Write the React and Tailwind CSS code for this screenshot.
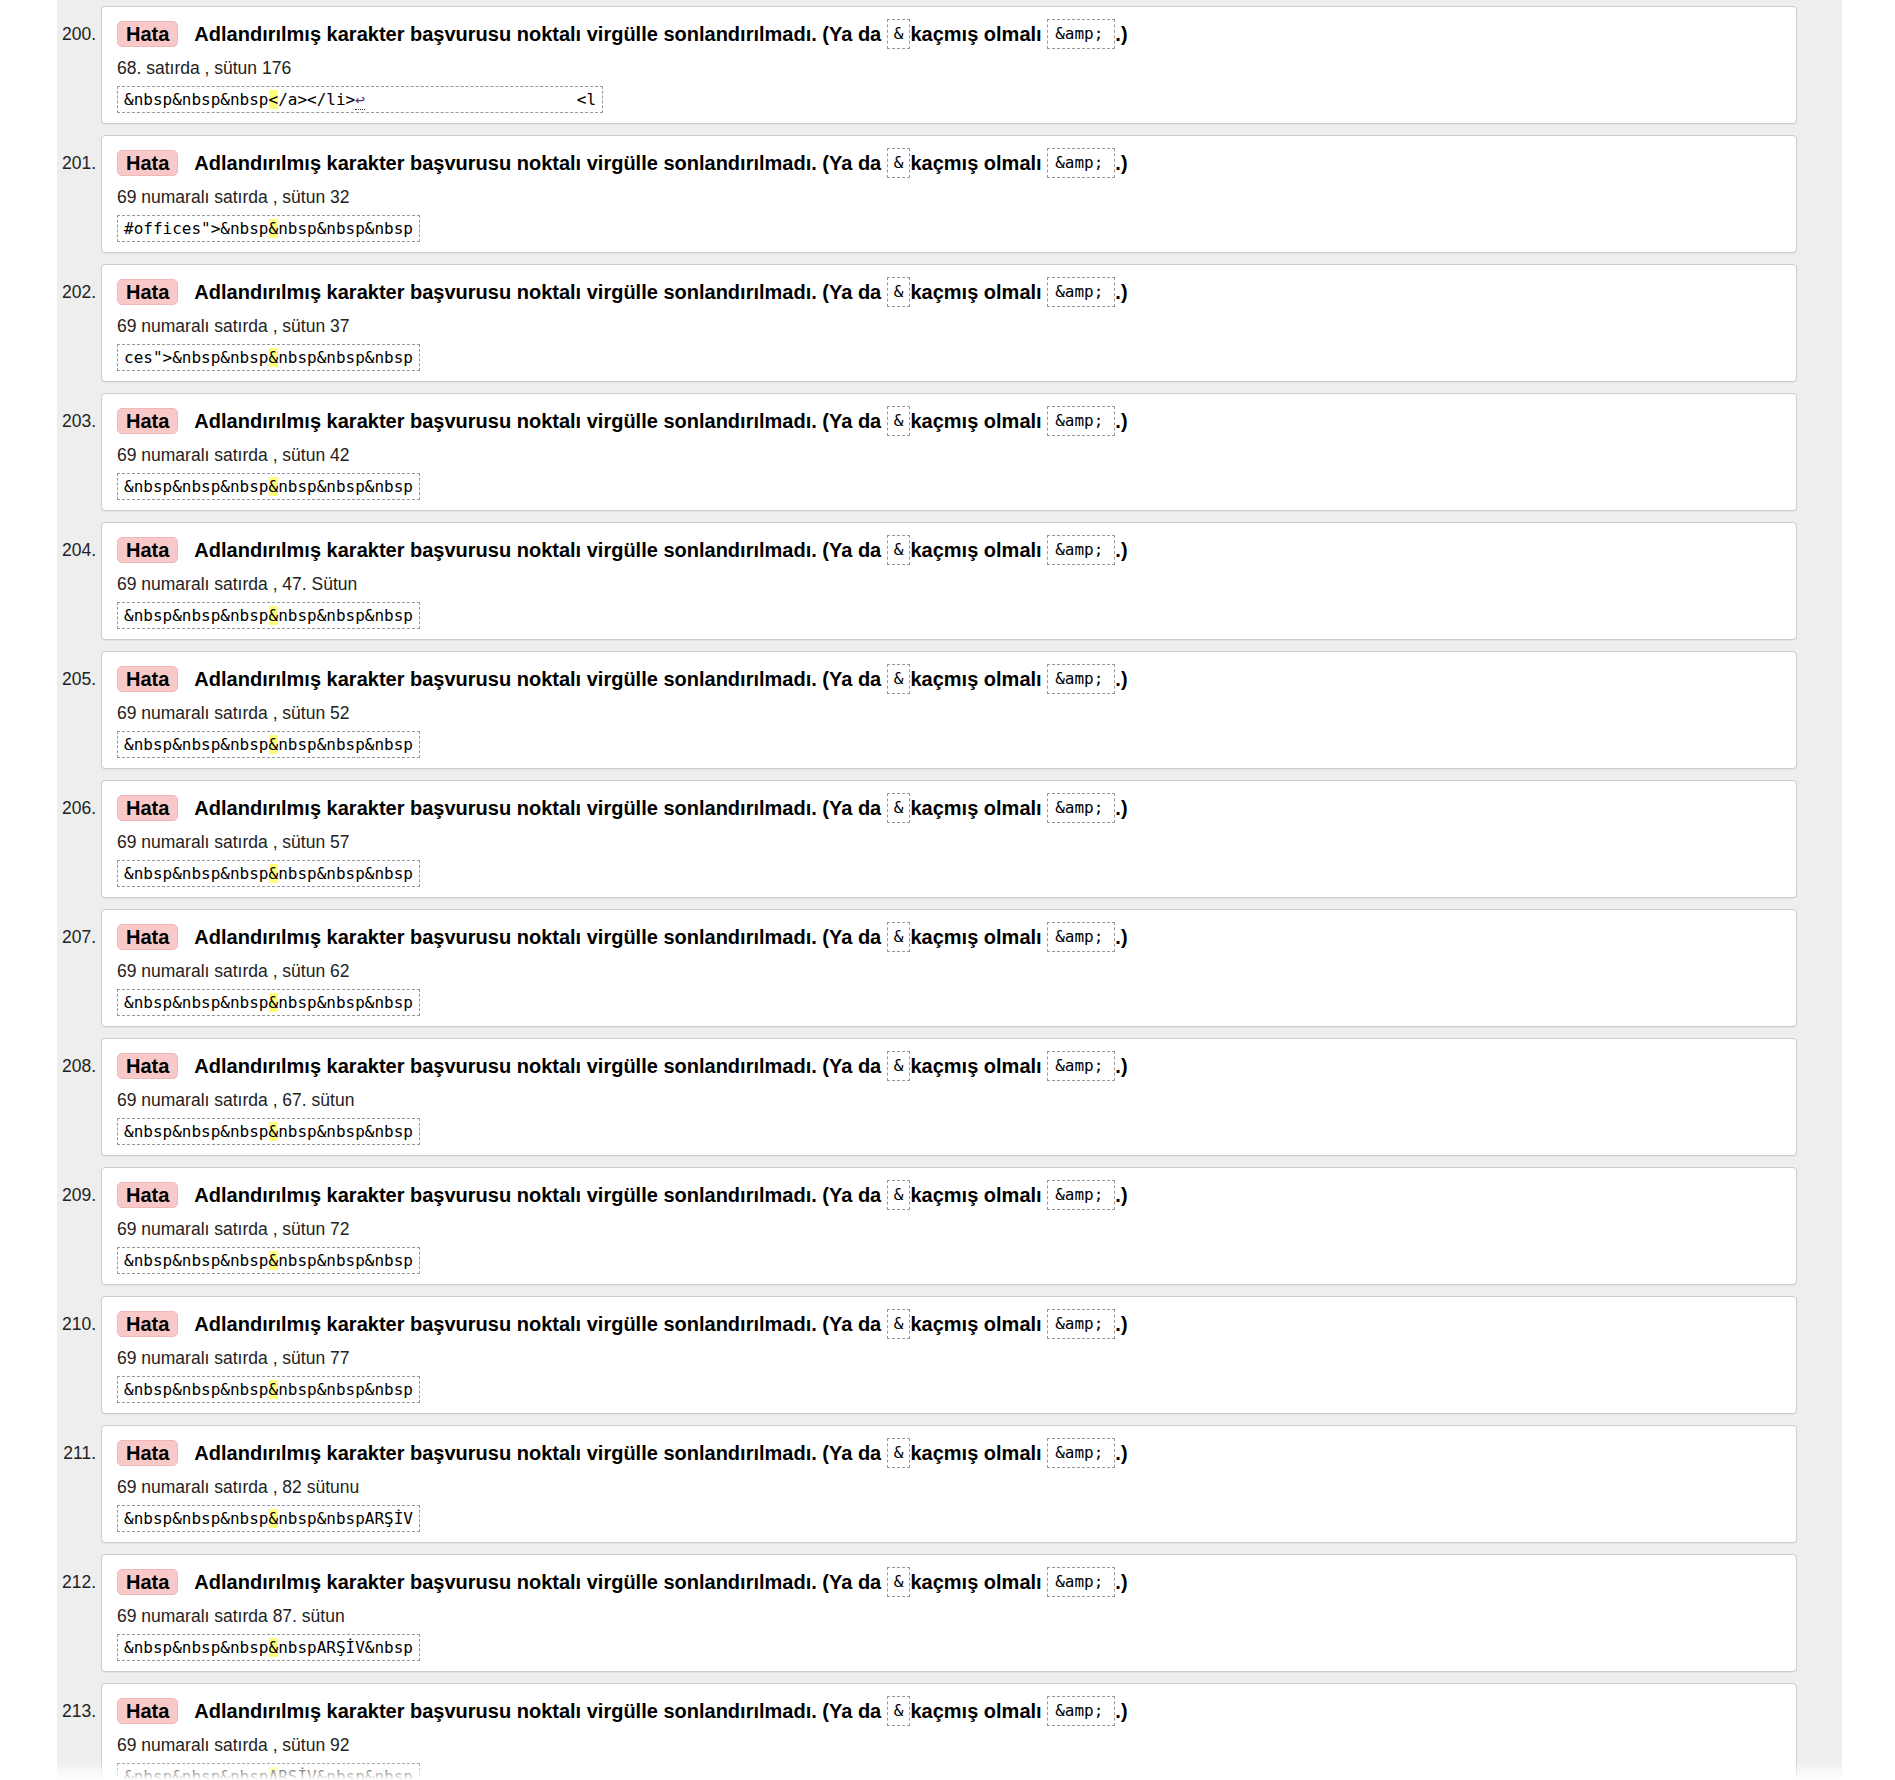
const NBSP3 = "&nbsp&nbsp&nbsp";

const items = [
  {
    n: 200,
    where: "68. satırda , sütun 176",
    code: { pre: NBSP3, hl: "<", post: "/a></li>", newline: true, tail: "                      <l" },
  },
  { n: 201, where: "69 numaralı satırda , sütun 32", code: { pre: '#offices">&nbsp', hl: "&", post: "nbsp&nbsp&nbsp" } },
  { n: 202, where: "69 numaralı satırda , sütun 37", code: { pre: 'ces">&nbsp&nbsp', hl: "&", post: "nbsp&nbsp&nbsp" } },
  { n: 203, where: "69 numaralı satırda , sütun 42", code: { pre: NBSP3, hl: "&", post: "nbsp&nbsp&nbsp" } },
  { n: 204, where: "69 numaralı satırda , 47. Sütun", code: { pre: NBSP3, hl: "&", post: "nbsp&nbsp&nbsp" } },
  { n: 205, where: "69 numaralı satırda , sütun 52", code: { pre: NBSP3, hl: "&", post: "nbsp&nbsp&nbsp" } },
  { n: 206, where: "69 numaralı satırda , sütun 57", code: { pre: NBSP3, hl: "&", post: "nbsp&nbsp&nbsp" } },
  { n: 207, where: "69 numaralı satırda , sütun 62", code: { pre: NBSP3, hl: "&", post: "nbsp&nbsp&nbsp" } },
  { n: 208, where: "69 numaralı satırda , 67. sütun", code: { pre: NBSP3, hl: "&", post: "nbsp&nbsp&nbsp" } },
  { n: 209, where: "69 numaralı satırda , sütun 72", code: { pre: NBSP3, hl: "&", post: "nbsp&nbsp&nbsp" } },
  { n: 210, where: "69 numaralı satırda , sütun 77", code: { pre: NBSP3, hl: "&", post: "nbsp&nbsp&nbsp" } },
  { n: 211, where: "69 numaralı satırda , 82 sütunu", code: { pre: NBSP3, hl: "&", post: "nbsp&nbspARŞİV" } },
  { n: 212, where: "69 numaralı satırda 87. sütun", code: { pre: NBSP3, hl: "&", post: "nbspARŞİV&nbsp" } },
  { n: 213, where: "69 numaralı satırda , sütun 92", code: { pre: NBSP3, hl: "A", post: "RŞİV&nbsp&nbsp" } },
];

const mono = "font-['DejaVu_Sans_Mono','Liberation_Mono',monospace] font-normal";

const Extract = ({ code }) => (
  <code
    className={`inline-block whitespace-pre border border-dashed border-[#999] px-[6px] py-[2px] text-[16px] leading-[21px] text-black ${mono}`}
  >
    {code.pre}
    <span className="bg-[#ffff77]">{code.hl}</span>
    {code.post}
    {code.newline && (
      <span className="border-b border-dotted border-[#333] text-[#5a2a6a]">↩</span>
    )}
    {code.tail}
  </code>
);

const Message = ({ item }) => (
  <div className="mb-[11px] flex">
    <div className="w-[44px] shrink-0 pr-[5px] pt-[13px] text-right text-[17.5px] leading-[30px] text-[#222]">
      {item.n}.
    </div>
    <div className="flex-1 rounded-[4px] border border-[#ccc] bg-white px-[15px] pt-[12px] pb-[10px] shadow-[0_1px_0_rgba(0,0,0,0.04)]">
      <div className="flex h-[30px] items-center whitespace-pre text-[20px] font-bold text-black">
        <span className="mr-[16px] h-[26px] rounded-[5px] border border-[#efb7b7] bg-[#f9c9c9] px-[8px] leading-[24px]">
          Hata
        </span>
        <span>Adlandırılmış karakter başvurusu noktalı virgülle sonlandırılmadı. (Ya da </span>
        <code className={`border border-dashed border-[#999] px-[6px] py-[3px] text-[16px] leading-[22px] text-black ${mono}`}>&amp;</code>
        <span>kaçmış olmalı </span>
        <code className={`border border-dashed border-[#999] pl-[7px] pr-[11px] py-[3px] text-[16px] leading-[22px] text-black ${mono}`}>
          &amp;amp;
        </code>
        <span>.)</span>
      </div>
      <p className="mt-[9px] text-[17.5px] leading-[20px] text-[#222]">{item.where}</p>
      <div className="mt-[8px] flex">
        <Extract code={item.code} />
      </div>
    </div>
  </div>
);

export default function App() {
  return (
    <div className="relative h-[1780px] overflow-hidden bg-white font-['Liberation_Sans',Arial,sans-serif]">
      <div className="ml-[57px] mr-[53px] min-h-full bg-[#eeeeee] pt-[6px] pr-[45px]">
        {items.map((item) => (
          <Message key={item.n} item={item} />
        ))}
      </div>
      <div className="pointer-events-none absolute inset-x-0 bottom-0 h-[20px] bg-gradient-to-b from-white/0 to-white" />
    </div>
  );
}
